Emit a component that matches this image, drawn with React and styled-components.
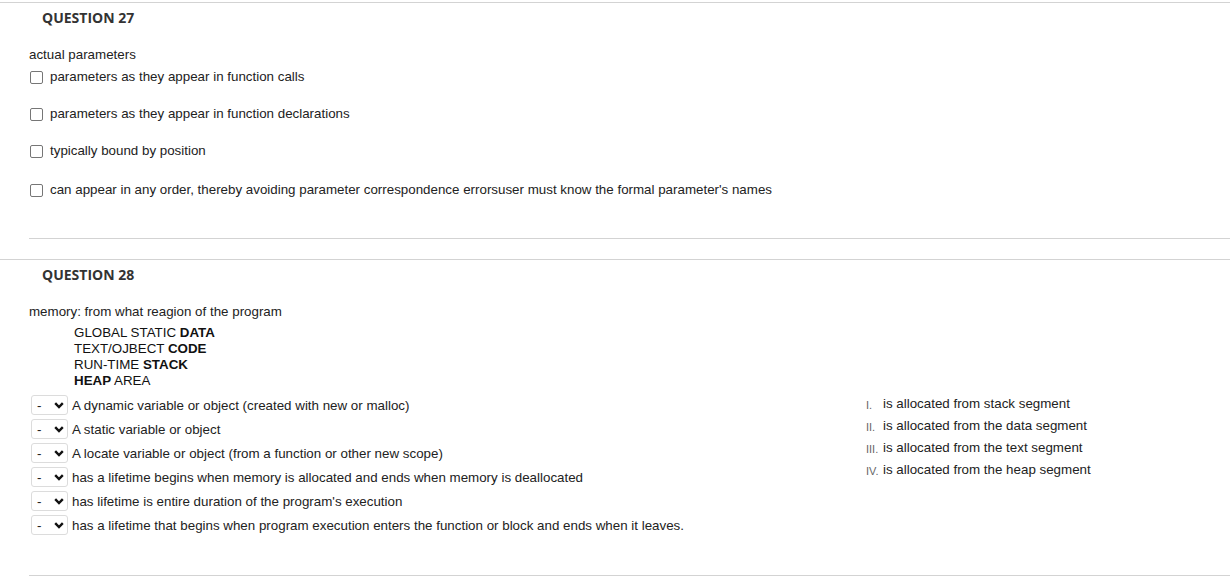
import React from 'react';
import styled, { createGlobalStyle } from 'styled-components';

const GlobalStyle = createGlobalStyle`
  body {
    margin: 0;
    background: #ffffff;
    font-family: 'Liberation Sans', Arial, sans-serif;
    font-size: 13.35px;
    color: #222222;
  }
`;

const Question = styled.section`
  border-top: 1px solid #d3d3d3;
  margin-top: ${(p) => p.$top}px;
`;

const Heading = styled.h3`
  margin: 5px 0 0 42px;
  font: 700 14px/20px 'Open Sans', 'Liberation Sans', sans-serif;
  color: #333333;
`;

const Body = styled.div`
  padding: 18px 0 0 29px;
`;

const Prompt = styled.div`
  line-height: 16px;
  padding-top: 1px;
  height: 15px;
`;

const Options = styled.div`
  display: flex;
  flex-direction: column;
  gap: 21px;
  margin-top: 7px;
`;

const OptionRow = styled.label`
  display: flex;
  align-items: center;
  gap: 7px;
  line-height: 16px;
  margin-top: ${(p) => p.$extra || 0}px;
`;

const Box = styled.span`
  width: 11px;
  height: 11px;
  border: 1px solid #767676;
  border-radius: 2px;
  margin-left: 1px;
  background: #fff;
  flex-shrink: 0;
`;

const Divider = styled.hr`
  border: 0;
  border-top: 1px solid #d3d3d3;
  margin: ${(p) => p.$top}px 0 0 29px;
`;

const Regions = styled.div`
  margin: 6px 0 0 45px;
  line-height: 16px;
  color: #111;
`;

const Match = styled.div`
  display: grid;
  grid-template-columns: 837px 1fr;
  margin-top: 3px;
`;

const Pairs = styled.div`
  display: flex;
  flex-direction: column;
  gap: 4px;
  padding-top: 3px;
`;

const PairRow = styled.div`
  display: flex;
  align-items: center;
  gap: 4px;
  height: 20px;
`;

const Select = styled.div`
  box-sizing: border-box;
  width: 37px;
  height: 20px;
  margin-left: 2px;
  border: 1px solid #dcdcdc;
  border-radius: 3px;
  background: #fff;
  display: flex;
  align-items: center;
  justify-content: space-between;
  padding: 0 3px 0 5px;
  color: #222;
  flex-shrink: 0;
`;

const Answers = styled.ol`
  margin: 0;
  padding: 1px 0 0;
  list-style: none;
`;

const Answer = styled.li`
  display: flex;
  align-items: baseline;
  height: 22px;
  line-height: 22px;
`;

const Numeral = styled.span`
  width: 17px;
  font-size: 11px;
  color: #666;
  flex-shrink: 0;
  position: relative;
  top: 1px;
`;

const Chevron = () => (
  <svg width="10" height="7" viewBox="0 0 10 7">
    <polyline points="1.2,1.2 5,5 8.8,1.2" fill="none" stroke="#111" strokeWidth="2.4" />
  </svg>
);

const choices = [
  'parameters as they appear in function calls',
  'parameters as they appear in function declarations',
  'typically bound by position',
  "can appear in any order, thereby avoiding parameter correspondence errorsuser must know the formal parameter's names",
];

const pairs = [
  'A dynamic variable or object (created with new or malloc)',
  'A static variable or object',
  'A locate variable or object (from a function or other new scope)',
  'has a lifetime begins when memory is allocated and ends when memory is deallocated',
  "has lifetime is entire duration of the program's execution",
  'has a lifetime that begins when program execution enters the function or block and ends when it leaves.',
];

const answers = [
  ['I.', 'is allocated from stack segment'],
  ['II.', 'is allocated from the data segment'],
  ['III.', 'is allocated from the text segment'],
  ['IV.', 'is allocated from the heap segment'],
];

export default function App() {
  return (
    <>
      <GlobalStyle />
      <Question $top={2}>
        <Heading>QUESTION 27</Heading>
        <Body>
          <Prompt>actual parameters</Prompt>
          <Options>
            {choices.map((c, i) => (
              <OptionRow key={i} $extra={i === 3 ? 2 : 0}>
                <Box />
                {c}
              </OptionRow>
            ))}
          </Options>
        </Body>
        <Divider $top={40} />
      </Question>

      <Question $top={20}>
        <Heading>QUESTION 28</Heading>
        <Body>
          <Prompt>memory: from what reagion of the program</Prompt>
          <Regions>
            <div>GLOBAL STATIC <b>DATA</b></div>
            <div>TEXT/OJBECT <b>CODE</b></div>
            <div>RUN-TIME <b>STACK</b></div>
            <div><b>HEAP</b> AREA</div>
          </Regions>
          <Match>
            <Pairs>
              {pairs.map((p, i) => (
                <PairRow key={i}>
                  <Select>
                    <span>-</span>
                    <Chevron />
                  </Select>
                  {p}
                </PairRow>
              ))}
            </Pairs>
            <Answers>
              {answers.map(([n, t]) => (
                <Answer key={n}>
                  <Numeral>{n}</Numeral>
                  {t}
                </Answer>
              ))}
            </Answers>
          </Match>
        </Body>
        <Divider $top={40} />
      </Question>
    </>
  );
}
